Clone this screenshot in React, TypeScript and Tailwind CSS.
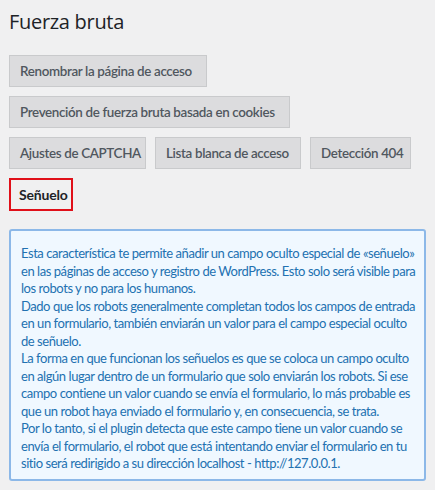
import React from "react";

const tabs = [
  { label: "Renombrar la página de acceso", w: "w-[198px]" },
  { label: "Prevención de fuerza bruta basada en cookies", w: "w-[281px]" },
  { label: "Ajustes de CAPTCHA", w: "w-[137px]" },
  { label: "Lista blanca de acceso", w: "w-[146px]" },
  { label: "Detección 404", w: "w-[101px]" },
];

const App = () => {
  return (
    <div className="w-[435px] h-[490px] bg-[#f0f0f1] px-[9px] pt-[8px] font-['Lato',sans-serif] overflow-hidden">
      <h1 className="text-[20px] leading-[28px] text-[#1d2327] font-normal font-['Open_Sans',sans-serif] tracking-[-0.3px]">
        Fuerza bruta
      </h1>

      <div className="flex flex-wrap gap-[9px] mt-[19px]">
        {tabs.map((t) => (
          <button
            key={t.label}
            className={`${t.w} h-[32px] bg-[#dcdcde] border border-[#c9cacc] text-[#50575e] text-[13.4px] font-semibold tracking-[-0.35px] text-left pl-[10px] whitespace-nowrap`}
          >
            {t.label}
          </button>
        ))}
        <button className="w-[64px] h-[33px] border-2 border-[#e0101a] text-[#1d2327] text-[14px] font-bold tracking-[-0.2px] text-left pl-[8px]">
          Señuelo
        </button>
      </div>

      <div className="mt-[18px] w-[417px] h-[252px] bg-[#f0f8ff] border-2 border-[#8cb8e8] rounded-[3px] pl-[10px] pr-[6px] pt-[14px] text-[#2271b1] text-[13px] leading-[17.5px] tracking-[-0.45px]">
        <p>
          Esta característica te permite añadir un campo oculto especial de «señuelo» en las páginas de acceso y registro de WordPress. Esto solo será visible para los robots y no para los humanos.
        </p>
        <p>
          Dado que los robots generalmente completan todos los campos de entrada en un formulario, también enviarán un valor para el campo especial oculto de señuelo.
        </p>
        <p>
          La forma en que funcionan los señuelos es que se coloca un campo oculto en algún lugar dentro de un formulario que solo enviarán los robots. Si ese campo contiene un valor cuando se envía el formulario, lo más probable es que un robot haya enviado el formulario y, en consecuencia, se trata.
        </p>
        <p>
          Por lo tanto, si el plugin detecta que este campo tiene un valor cuando se envía el formulario, el robot que está intentando enviar el formulario en tu sitio será redirigido a su dirección localhost - http://127.0.0.1.
        </p>
      </div>
    </div>
  );
};

export default App;
